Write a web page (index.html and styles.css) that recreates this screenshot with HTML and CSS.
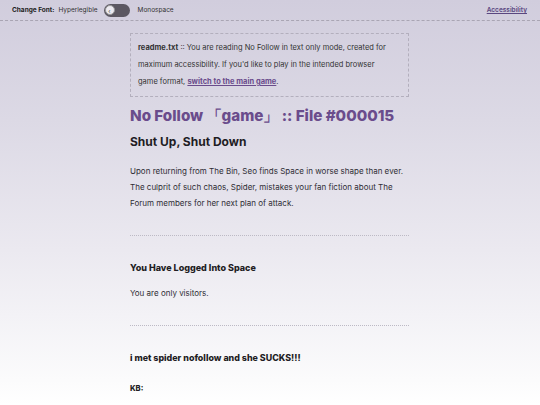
FILE: index.html
```html
<!DOCTYPE html>
<html>
<head>
<meta charset="utf-8">
<link rel="stylesheet" href="styles.css">
</head>
<body>
<header class="topbar">
  <div class="font-switch">
    <span class="label">Change Font:</span>
    <span class="opt">Hyperlegible</span>
    <span class="toggle"><span class="knob">‹</span></span>
    <span class="opt">Monospace</span>
  </div>
  <a class="a11y" href="#">Accessibility</a>
</header>
<main class="content">
  <div class="readme"><b>readme.txt</b> :: You are reading No Follow in text only mode, created for maximum accessibility. If you'd like to play in the intended browser<br>game format, <a href="#">switch to the main game</a>.</div>
  <h1 class="title">No Follow 「game」 :: File #000015</h1>
  <h2 class="subtitle">Shut Up, Shut Down</h2>
  <p class="para">Upon returning from The Bin, Seo finds Space in worse shape than ever. The culprit of such chaos, Spider, mistakes your fan fiction about The Forum members for her next plan of attack.</p>
  <hr class="divider">
  <h3 class="section">You Have Logged Into Space</h3>
  <p class="para">You are only visitors.</p>
  <hr class="divider">
  <h3 class="section big">i met spider nofollow and she SUCKS!!!</h3>
  <p class="speaker">KB:</p>
</main>
</body>
</html>
```
FILE: styles.css
```css
html, body { margin: 0; padding: 0; }
body {
  width: 540px;
  min-height: 405px;
  background: linear-gradient(to bottom, #d1cddd 0px, #dcd9e5 120px, #ebe9f0 250px, #fbfbfc 380px, #ffffff 405px);
  font-family: "Inter", "Liberation Sans", sans-serif;
  color: #2a2830;
  overflow: hidden;
}
.topbar {
  height: 20px;
  border-bottom: 1px dashed #a9a5b3;
  display: flex;
  align-items: center;
  justify-content: space-between;
  padding: 0 13px 0 12px;
  font-size: 6.5px;
}
.font-switch { display: flex; align-items: center; }
.label { font-weight: 700; color: #222; margin-right: 4px; }
.opt { color: #333; }
.toggle {
  width: 26px; height: 13px; border-radius: 7px;
  background: #5c5862;
  margin: 0 8px 0 6px;
  display: flex; align-items: center; padding-left: 1px; box-sizing: border-box;
}
.knob {
  width: 10px; height: 10px; border-radius: 50%;
  background: #eceaf0; border: 0.5px solid #999;
  font-size: 6px; line-height: 10px; text-align: center; color: #444;
  box-sizing: border-box;
}
.a11y { color: #5a4780; font-weight: 600; text-decoration: underline; }
.content { width: 279px; margin: 12px 0 0 130px; }
.readme {
  border: 1px dashed #b3afbd;
  padding: 5px 5px 6px 7px;
  font-size: 7.5px;
  line-height: 17px;
  color: #333;
}
.readme a { color: #6a4c8c; font-weight: 700; text-decoration: underline; }
.title {
  margin: 7px 0 0 0;
  font-size: 15.2px;
  line-height: 24px;
  font-weight: 800;
  color: #6a4c8c;
  white-space: nowrap;
}
.subtitle {
  margin: 5px 0 0 0;
  font-size: 12px;
  line-height: 18px;
  font-weight: 700;
  color: #1f1d24;
}
.para {
  margin: 12px 0 0 0;
  font-size: 8px;
  line-height: 16px;
  color: #2f2d35;
}
.divider {
  border: 0;
  border-top: 1px dotted #bdbac5;
  margin: 24px 0 0 0;
}
.section {
  margin: 25px 0 0 0;
  font-size: 9px;
  line-height: 14px;
  font-weight: 800;
  color: #1f1d24;
}
.section + .para { margin-top: 10px; }
.big { font-size: 8.9px; margin-top: 25px; }
.speaker {
  margin: 19px 0 0 0;
  font-size: 7.6px;
  font-weight: 800;
  color: #1f1d24;
}
```
